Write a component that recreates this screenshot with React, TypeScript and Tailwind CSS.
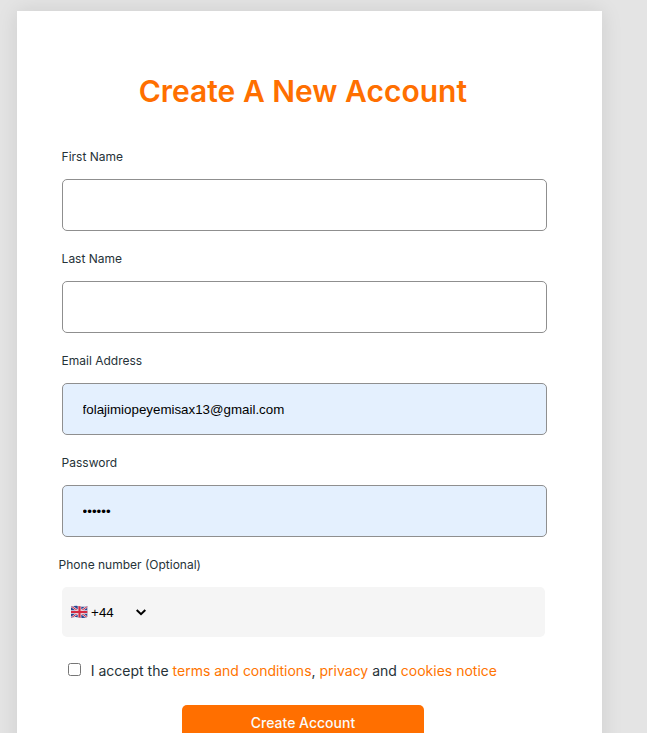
import React from "react";

interface FieldProps {
  id: string;
  label: string;
  type?: string;
  value?: string;
}

function Field({ id, label, type = "text", value = "" }: FieldProps) {
  return (
    <div className="h-[102px]">
      <label htmlFor={id} className="block h-[31px] text-xs leading-[18px] text-[#263238]">
        {label}
      </label>
      <input
        id={id}
        type={type}
        defaultValue={value}
        className={`block h-[52px] w-[485px] rounded-[5px] border border-[#8f8f8f] px-5 font-['Liberation_Sans',Arial,sans-serif] text-[13.333px] text-black outline-none ${
          value ? "bg-[#e4f0fe]" : "bg-white"
        }`}
      />
    </div>
  );
}

function Flag() {
  return (
    <svg width="17" height="14" viewBox="0 0 17 14" className="shrink-0" aria-label="United Kingdom">
      <clipPath id="flag">
        <path d="M0 1.7Q4.5.2 8.5 1.2T16.3 1.2V12Q12.5 13.6 8.5 12.5T0 12.5Z" />
      </clipPath>
      <g clipPath="url(#flag)">
        <path fill="#29458f" d="M0 0h17v14H0z" />
        <path stroke="#e3dbe8" strokeWidth="2.2" d="M0 1l17 12M17 1L0 13" />
        <path stroke="#d52b42" strokeWidth="1" d="M0 1l17 12M17 1L0 13" />
        <path stroke="#f1e3ea" strokeWidth="3.6" d="M8.5 0v14M0 7h17" />
        <path stroke="#d52b42" strokeWidth="2.2" d="M8.5 0v14M0 7h17" />
      </g>
    </svg>
  );
}

export default function App() {
  return (
    <div className="h-[733px] w-[647px] overflow-hidden bg-[#e4e4e4] pt-[11px] pl-[17px] font-['Inter',sans-serif]">
      <main className="h-[800px] w-[585px] bg-white pt-[62px] pl-[44.6px] shadow-[0_0_20px_rgba(0,0,0,0.1)]">
        <h1 className="h-[75px] w-[482.5px] text-center text-[30px] leading-[37px] font-semibold whitespace-nowrap text-[#ff6f00]">
          Create A New Account
        </h1>
        <form>
          <Field id="first" label="First Name" />
          <Field id="last" label="Last Name" />
          <Field id="email" label="Email Address" value="folajimiopeyemisax13@gmail.com" />
          <Field id="password" label="Password" type="password" value="secret" />
          <div className="-ml-[3px] h-[31px] text-xs leading-[18px] text-[#263238]">Phone number (Optional)</div>
          <div className="flex h-[50px] w-[483px] items-center rounded-[5px] bg-[#f5f5f5] pl-[9px]">
            <Flag />
            <span className="ml-[3.5px] w-[44.6px] pt-px font-['Liberation_Sans',Arial,sans-serif] text-[13.333px] text-black">+44</span>
            <svg width="10" height="7" viewBox="0 0 10 7" fill="none" stroke="black" strokeWidth="2">
              <path d="M.7 1L5 5.2 9.3 1" />
            </svg>
          </div>
          <div className="mt-6 flex h-5 items-center text-sm leading-5 whitespace-nowrap text-[#263238]">
            <input type="checkbox" aria-label="Accept terms" className="mt-[-4px] mr-[10.2px] ml-[6px] h-[13px] w-[13px]" />
            <p>
              I accept the <a className="text-[#ff7400]">terms and conditions</a>, <a className="text-[#ff7400]">privacy</a> and{" "}
              <a className="text-[#ff7400]">cookies notice</a>
            </p>
          </div>
          <button type="button" className="mt-6 ml-[120.4px] block h-9 w-[242px] rounded-[5px] bg-[#ff6f00] text-sm font-medium text-[#fafafa]">
            Create Account
          </button>
        </form>
      </main>
    </div>
  );
}
